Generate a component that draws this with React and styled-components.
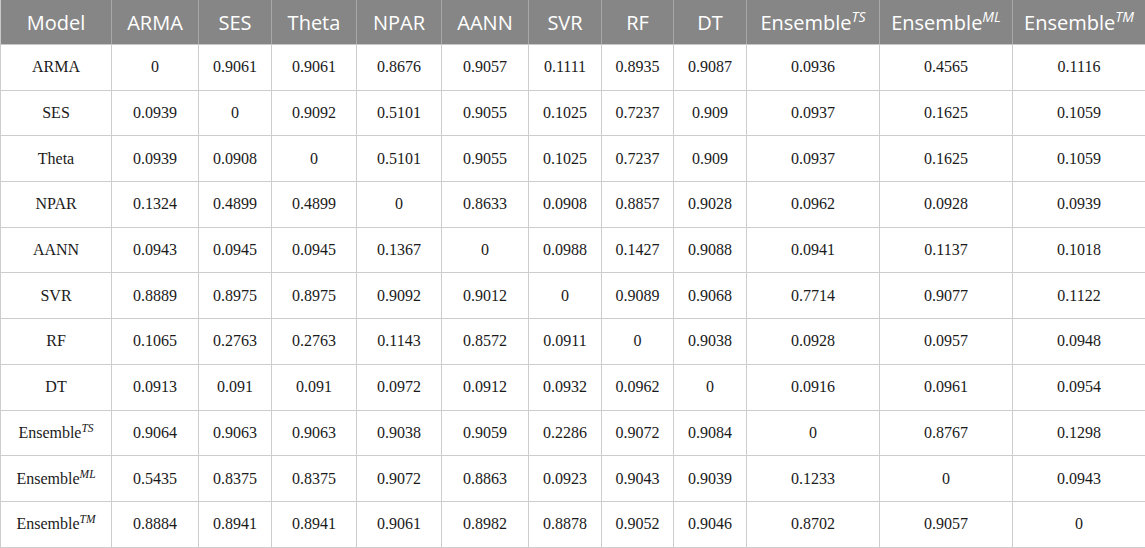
import React from "react";
import styled, { createGlobalStyle } from "styled-components";

const Global = createGlobalStyle`
  html, body { margin: 0; padding: 0; background: #fff; }
`;

const Table = styled.table`
  width: 1145px;
  border-collapse: collapse;
  table-layout: fixed;
`;

const HeadCell = styled.th`
  height: 44px;
  padding: 0;
  background: #868686;
  color: #fff;
  font-family: "Open Sans", "Noto Sans", sans-serif;
  font-weight: 400;
  font-size: 20px;
  text-align: center;
  border-left: 1px solid #a8a8a8;
  border-bottom: 1px solid #c8c8c8;
  &:first-child { border-left: 1px solid #c8c8c8; }
  &:last-child { border-right: 1px solid #c8c8c8; }
  white-space: nowrap;
`;

const Cell = styled.td`
  height: 44.7px;
  padding: 0;
  font-family: "Liberation Serif", "Times New Roman", serif;
  font-size: 16px;
  color: #1a1a1a;
  text-align: center;
  border: 1px solid #cdcdcd;
  white-space: nowrap;
`;

const Sup = styled.sup`
  font-style: italic;
  font-size: ${(p) => (p.$head ? "14px" : "11.5px")};
  vertical-align: ${(p) => (p.$head ? "8px" : "6px")};
  line-height: 0;
`;

const widths = [111, 87, 73, 85, 85, 87, 73, 72, 73, 133, 133, 133];

const Name = ({ base, sup, head }) => (
  <>
    {base}
    {sup && <Sup $head={head}>{sup}</Sup>}
  </>
);

const headers = [
  ["Model"], ["ARMA"], ["SES"], ["Theta"], ["NPAR"], ["AANN"], ["SVR"], ["RF"], ["DT"],
  ["Ensemble", "TS"], ["Ensemble", "ML"], ["Ensemble", "TM"],
];

const rows = [
  [["ARMA"], "0", "0.9061", "0.9061", "0.8676", "0.9057", "0.1111", "0.8935", "0.9087", "0.0936", "0.4565", "0.1116"],
  [["SES"], "0.0939", "0", "0.9092", "0.5101", "0.9055", "0.1025", "0.7237", "0.909", "0.0937", "0.1625", "0.1059"],
  [["Theta"], "0.0939", "0.0908", "0", "0.5101", "0.9055", "0.1025", "0.7237", "0.909", "0.0937", "0.1625", "0.1059"],
  [["NPAR"], "0.1324", "0.4899", "0.4899", "0", "0.8633", "0.0908", "0.8857", "0.9028", "0.0962", "0.0928", "0.0939"],
  [["AANN"], "0.0943", "0.0945", "0.0945", "0.1367", "0", "0.0988", "0.1427", "0.9088", "0.0941", "0.1137", "0.1018"],
  [["SVR"], "0.8889", "0.8975", "0.8975", "0.9092", "0.9012", "0", "0.9089", "0.9068", "0.7714", "0.9077", "0.1122"],
  [["RF"], "0.1065", "0.2763", "0.2763", "0.1143", "0.8572", "0.0911", "0", "0.9038", "0.0928", "0.0957", "0.0948"],
  [["DT"], "0.0913", "0.091", "0.091", "0.0972", "0.0912", "0.0932", "0.0962", "0", "0.0916", "0.0961", "0.0954"],
  [["Ensemble", "TS"], "0.9064", "0.9063", "0.9063", "0.9038", "0.9059", "0.2286", "0.9072", "0.9084", "0", "0.8767", "0.1298"],
  [["Ensemble", "ML"], "0.5435", "0.8375", "0.8375", "0.9072", "0.8863", "0.0923", "0.9043", "0.9039", "0.1233", "0", "0.0943"],
  [["Ensemble", "TM"], "0.8884", "0.8941", "0.8941", "0.9061", "0.8982", "0.8878", "0.9052", "0.9046", "0.8702", "0.9057", "0"],
];

export default function App() {
  return (
    <>
      <Global />
      <Table>
        <colgroup>
          {widths.map((w, i) => (
            <col key={i} style={{ width: w }} />
          ))}
        </colgroup>
        <thead>
          <tr>
            {headers.map(([b, s], i) => (
              <HeadCell key={i}>
                <Name base={b} sup={s} head />
              </HeadCell>
            ))}
          </tr>
        </thead>
        <tbody>
          {rows.map(([name, ...vals], r) => (
            <tr key={r}>
              <Cell>
                <Name base={name[0]} sup={name[1]} />
              </Cell>
              {vals.map((v, c) => (
                <Cell key={c}>{v}</Cell>
              ))}
            </tr>
          ))}
        </tbody>
      </Table>
    </>
  );
}
